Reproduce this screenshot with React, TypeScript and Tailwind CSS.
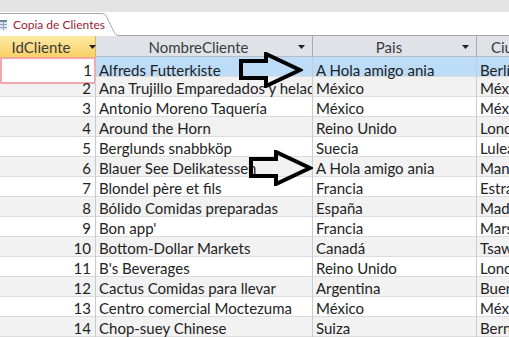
import React from "react";

const rows: [number, string, string, string][] = [
  [1, "Alfreds Futterkiste", "A Hola amigo ania", "Berlín"],
  [2, "Ana Trujillo Emparedados y helados", "México", "México D.F."],
  [3, "Antonio Moreno Taquería", "México", "México D.F."],
  [4, "Around the Horn", "Reino Unido", "Londres"],
  [5, "Berglunds snabbköp", "Suecia", "Luleå"],
  [6, "Blauer See Delikatessen", "A Hola amigo ania", "Mannheim"],
  [7, "Blondel père et fils", "Francia", "Estrasburgo"],
  [8, "Bólido Comidas preparadas", "España", "Madrid"],
  [9, "Bon app'", "Francia", "Marsella"],
  [10, "Bottom-Dollar Markets", "Canadá", "Tsawassen"],
  [11, "B's Beverages", "Reino Unido", "Londres"],
  [12, "Cactus Comidas para llevar", "Argentina", "Buenos Aires"],
  [13, "Centro comercial Moctezuma", "México", "México D.F."],
  [14, "Chop-suey Chinese", "Suiza", "Bern"],
];

function Drop() {
  return (
    <svg width="9" height="6" viewBox="0 0 9 6" className="shrink-0">
      <path d="M1 1 L8 1 L4.5 5 Z" fill="#222" />
    </svg>
  );
}

function Arrow() {
  return (
    <svg width="64" height="36" viewBox="0 0 64 36">
      <polygon
        points="2,9 27,9 27,2 61,18 27,34 27,26 2,26"
        fill="none"
        stroke="#000"
        strokeWidth="4"
        strokeLinejoin="miter"
      />
    </svg>
  );
}

export default function App() {
  return (
    <div
      className="w-[509px] h-[337px] overflow-hidden bg-white text-[15px] text-[#222]"
      style={{ fontFamily: "Lato, 'Liberation Sans', sans-serif" }}
    >
      <div className="h-[12px] bg-[#e4e4e4]" />
      <div className="h-[24px] flex items-end bg-white">
        <div className="flex h-[23px] items-end">
          <div className="w-[100px] h-[23px] border-t border-[#a8a8a8] bg-white flex items-center gap-[6px] overflow-visible">
            <svg width="7" height="10" viewBox="0 0 7 10" className="shrink-0">
              <rect x="0" y="0" width="7" height="10" fill="#dfe6ef" />
              <rect x="0" y="0" width="7" height="2" fill="#6b86a8" />
              <line x1="0" y1="4.5" x2="7" y2="4.5" stroke="#8aa0bd" />
              <line x1="0" y1="7.5" x2="7" y2="7.5" stroke="#8aa0bd" />
              <line x1="3.5" y1="2" x2="3.5" y2="10" stroke="#8aa0bd" />
            </svg>
            <span className="text-[#9b2335] text-[12px] leading-none whitespace-nowrap">Copia de Clientes</span>
          </div>
          <svg width="18" height="23" viewBox="0 0 18 23" className="shrink-0">
            <path d="M0 0.5 L2 0.5 Q5 0.5 6.5 3.5 L14 19 Q16 22.5 18 22.5" fill="white" stroke="#a8a8a8" />
          </svg>
        </div>
        <div className="flex-1 h-[1px] bg-[#a8a8a8]" />
      </div>

      <div className="relative">
        <div className="grid grid-cols-[96px_217px_164px_1fr] h-[21px] border-b border-[#b9bec6] bg-[#dfe3e8] text-[#3b3b3b]">
          <div className="flex items-center justify-center gap-[18px] bg-gradient-to-b from-[#fde9a5] to-[#f8cf5a] border-r border-[#d6b75a] pl-[14px]">
            <span>IdCliente</span>
            <Drop />
          </div>
          <div className="flex items-center border-r border-[#a6acb4] pr-[6px]">
            <span className="flex-1 text-center pl-[4px]">NombreCliente</span>
            <Drop />
          </div>
          <div className="flex items-center border-r border-[#a6acb4] pr-[6px]">
            <span className="flex-1 text-center pl-[4px]">Pais</span>
            <Drop />
          </div>
          <div className="flex items-center pl-[14px] whitespace-nowrap overflow-hidden">Ciudad</div>
        </div>

        {rows.map(([id, name, pais, ciudad]) => {
          const sel = id === 1;
          const bg = sel ? "bg-[#bcdcf8]" : id % 2 === 0 ? "bg-[#f2f2f2]" : "bg-white";
          return (
            <div
              key={id}
              className={`grid grid-cols-[96px_217px_164px_1fr] h-[20px] border-b border-[#dcdcdc] ${bg}`}
            >
              <div
                className={
                  sel
                    ? "bg-white border-2 border-[#f2a7aa] flex items-center justify-end pr-[2px] -mb-[1px]"
                    : "flex items-center justify-end pr-[4px] border-r border-[#c6ccd4]"
                }
              >
                {id}
              </div>
              <div className="flex items-center pl-[3px] overflow-hidden whitespace-nowrap border-r border-[#c6ccd4]">
                {name}
              </div>
              <div className="flex items-center pl-[3px] overflow-hidden whitespace-nowrap border-r border-[#c6ccd4]">
                {pais}
              </div>
              <div className="flex items-center pl-[3px] overflow-hidden whitespace-nowrap">
                {ciudad}
              </div>
            </div>
          );
        })}

        <div className="absolute left-[239px] top-[16px]">
          <Arrow />
        </div>
        <div className="absolute left-[249px] top-[114px]">
          <Arrow />
        </div>
      </div>
    </div>
  );
}
